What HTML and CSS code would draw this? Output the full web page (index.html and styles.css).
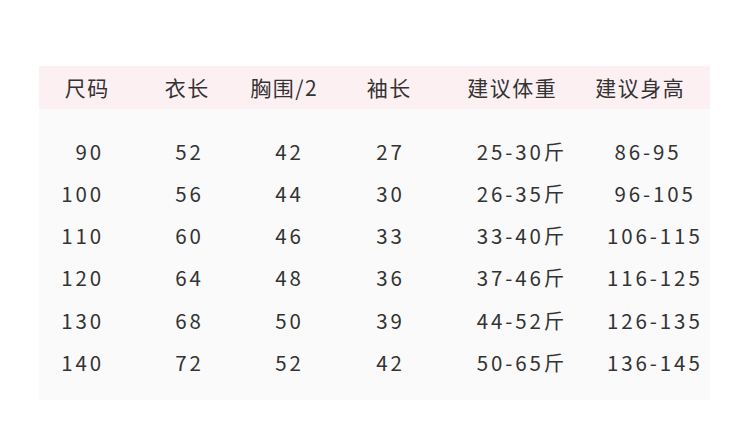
FILE: index.html
```html
<!DOCTYPE html>
<html lang="zh">
<head>
<meta charset="utf-8">
<link rel="stylesheet" href="styles.css">
</head>
<body>
<div class="page">
  <div class="panel">
    <div class="row head">
      <span>尺码</span><span>衣长</span><span>胸围/2</span><span>袖长</span><span>建议体重</span><span>建议身高</span>
    </div>
    <div class="body">
      <div class="row"><span>90</span><span>52</span><span>42</span><span>27</span><span>25-30斤</span><span>&nbsp;86-95</span></div>
      <div class="row"><span>100</span><span>56</span><span>44</span><span>30</span><span>26-35斤</span><span>&nbsp;96-105</span></div>
      <div class="row"><span>110</span><span>60</span><span>46</span><span>33</span><span>33-40斤</span><span>106-115</span></div>
      <div class="row"><span>120</span><span>64</span><span>48</span><span>36</span><span>37-46斤</span><span>116-125</span></div>
      <div class="row"><span>130</span><span>68</span><span>50</span><span>39</span><span>44-52斤</span><span>126-135</span></div>
      <div class="row"><span>140</span><span>72</span><span>52</span><span>42</span><span>50-65斤</span><span>136-145</span></div>
    </div>
  </div>
</div>
</body>
</html>
```
FILE: styles.css
```css
* { box-sizing: border-box; }
html, body {
  margin: 0;
  padding: 0;
  background: #ffffff;
}
body {
  width: 750px;
  height: 430px;
  overflow: hidden;
  font-family: "Noto Sans CJK SC", "Noto Sans", sans-serif;
  color: #333333;
}
.page {
  padding: 66px 40px 0 39px;
}
.panel {
  width: 671px;
  background: #fafafa;
}
.row {
  display: grid;
  grid-template-columns: 92px 114px 86px 116px 147px 116px;
  align-items: center;
  height: 42.2px;
}
.row span {
  text-align: center;
  white-space: nowrap;
  font-size: 20.5px;
  letter-spacing: 2.9px;
  text-indent: 2.9px;
  line-height: 1;
}
.row span:first-child {
  text-align: right;
  text-indent: 0;
  padding-right: 27px;
}
.row span:last-child {
  text-align: left;
  text-indent: 0;
  padding-left: 13px;
}
.head {
  height: 43px;
  background: #fdf0f3;
  grid-template-columns: 95px 105px 89px 121px 125px 131px;
}
.head span,
.head span:first-child,
.head span:last-child {
  font-size: 21px;
  letter-spacing: 1.5px;
  text-indent: 1.5px;
  text-align: center;
  padding: 0;
}
.body {
  padding: 21px 0 17px;
}
```
